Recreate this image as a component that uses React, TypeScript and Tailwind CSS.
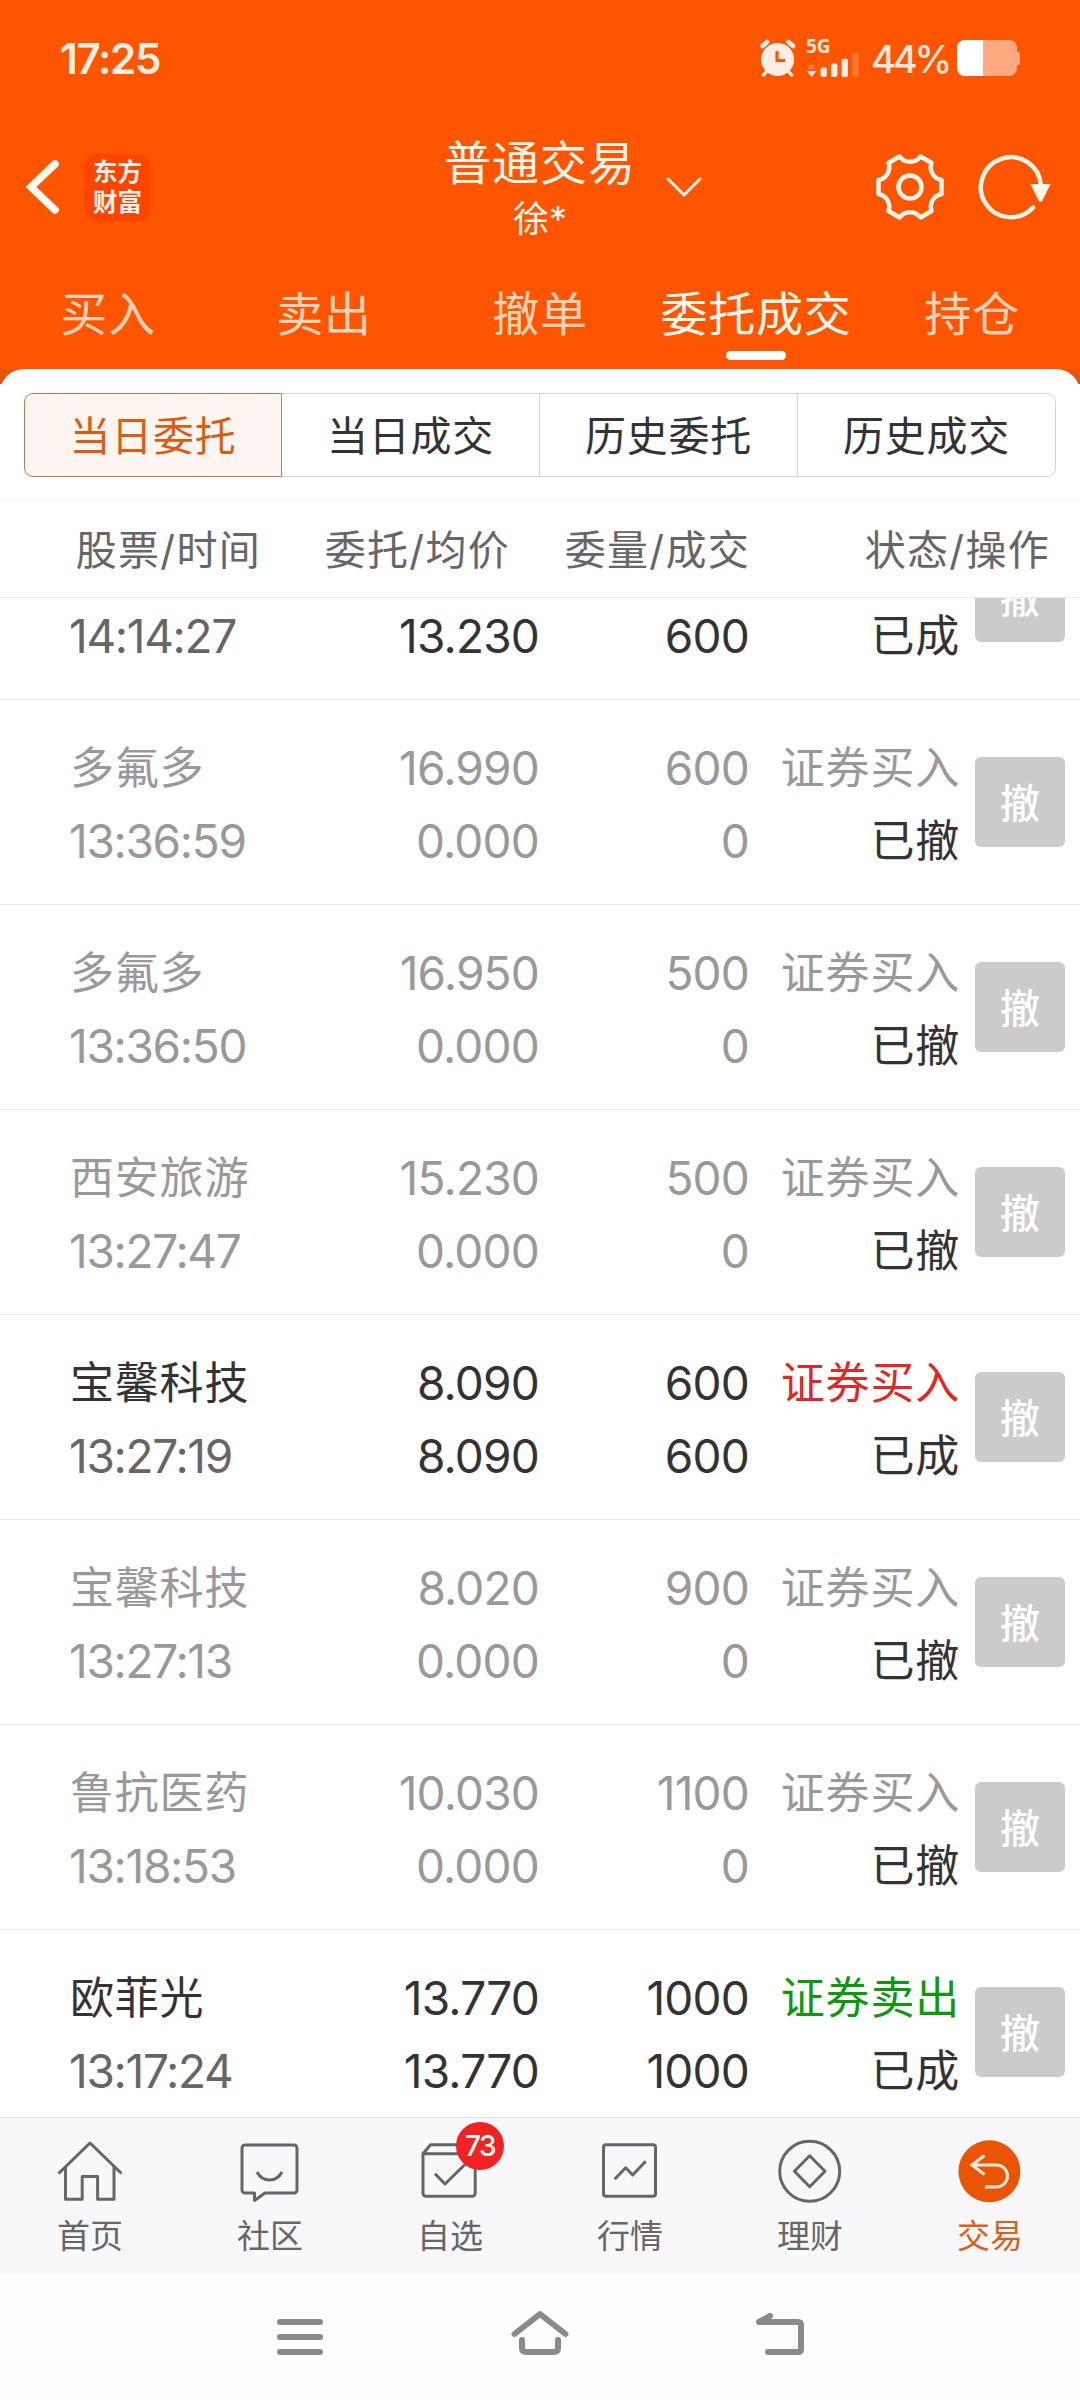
import type { ReactNode } from 'react';
import { clsx } from 'clsx';

interface Order {
  name?: string;
  time: string;
  price?: string;
  avgPrice: string;
  amount?: string;
  dealAmount: string;
  side?: 'buy' | 'sell';
  status: '已成' | '已撤';
}

const orders: Order[] = [
  { time: '14:14:27', avgPrice: '13.230', dealAmount: '600', status: '已成' },
  { name: '多氟多', time: '13:36:59', price: '16.990', avgPrice: '0.000', amount: '600', dealAmount: '0', side: 'buy', status: '已撤' },
  { name: '多氟多', time: '13:36:50', price: '16.950', avgPrice: '0.000', amount: '500', dealAmount: '0', side: 'buy', status: '已撤' },
  { name: '西安旅游', time: '13:27:47', price: '15.230', avgPrice: '0.000', amount: '500', dealAmount: '0', side: 'buy', status: '已撤' },
  { name: '宝馨科技', time: '13:27:19', price: '8.090', avgPrice: '8.090', amount: '600', dealAmount: '600', side: 'buy', status: '已成' },
  { name: '宝馨科技', time: '13:27:13', price: '8.020', avgPrice: '0.000', amount: '900', dealAmount: '0', side: 'buy', status: '已撤' },
  { name: '鲁抗医药', time: '13:18:53', price: '10.030', avgPrice: '0.000', amount: '1100', dealAmount: '0', side: 'buy', status: '已撤' },
  { name: '欧菲光', time: '13:17:24', price: '13.770', avgPrice: '13.770', amount: '1000', dealAmount: '1000', side: 'sell', status: '已成' },
];

const tabs = ['买入', '卖出', '撤单', '委托成交', '持仓'];
const segments = ['当日委托', '当日成交', '历史委托', '历史成交'];

function StatusBar() {
  return (
    <div className="flex h-[116px] items-center justify-between pl-[60px] pr-[60px]">
      <span className="pt-px text-[42px] font-semibold leading-none tracking-[-1.3px] text-[#ffeee0]">17:25</span>
      <div className="flex items-center">
        <svg className="h-[40px] w-[40px]" viewBox="0 0 40 40" fill="none" strokeLinecap="round">
          <circle cx="19.6" cy="21.5" r="16.5" fill="#ffeee6" />
          <path d="M4.500 8L9 4M35 8l-4.500-4" stroke="#ffeee6" strokeWidth="4.500" />
          <path d="M8 34l-2.500 3M31 34l2.500 3" stroke="#ffeee6" strokeWidth="3.500" />
          <path d="M19 13v9.500h8" stroke="#ff5500" strokeWidth="3.200" strokeLinecap="butt" />
        </svg>
        <div className="ml-[8px] flex h-[40px] w-[56px] flex-col">
          <span className="h-[15px] font-['Noto_Sans'] text-[19px] font-bold leading-[17px] text-[#ffe4d4]">5G</span>
          <svg className="h-[26px] w-[56px]" viewBox="0 0 56 26">
            <path d="M0 17l4.700-6 4.800 6z" fill="#ff7c3d" />
            <path d="M0 19h9.500l-4.700 6z" fill="#ffeee6" />
            <rect x="14" y="15" width="6.500" height="10" rx="2" fill="#ffeee6" />
            <rect x="25" y="11" width="6.500" height="14" rx="2" fill="#ffeee6" />
            <rect x="36" y="6" width="6.500" height="19" rx="2" fill="#ffeee6" />
            <rect x="47" y="0" width="6.500" height="25" rx="2" fill="#ff7733" />
          </svg>
        </div>
        <span className="ml-[9px] w-[78px] pt-px text-[38px] font-medium leading-none tracking-[-3.2px] text-[#ffe9dc]">44%</span>
        <div className="ml-[8px] flex items-center">
          <div className="h-[36px] w-[60px] overflow-hidden rounded-[8px] bg-[#ffa981]">
            <div className="h-full w-[26px] bg-white" />
          </div>
          <div className="h-[13px] w-[3px] rounded-r-[2px] bg-[#ffa981]" />
        </div>
      </div>
    </div>
  );
}

function TitleBar() {
  return (
    <div className="grid h-[142px] grid-cols-[440px_1fr_238px]">
      <div className="flex items-center pl-[24px]">
        <svg className="h-[60px] w-[40px]" viewBox="0 0 40 60" fill="none" stroke="#fffaf0" strokeWidth="7.500" strokeLinecap="round">
          <path d="M31 7L7 30l24 23" />
        </svg>
        <div className="ml-[20px] flex h-[67px] w-[67px] flex-col items-center justify-center rounded-[14px] bg-[#ff4400] text-[24.5px] font-bold leading-[30px] text-[#fff3ec]">
          <span>东方</span>
          <span>财富</span>
        </div>
      </div>
      <div className="flex items-center">
        <div className="flex w-[200px] flex-col items-center pt-[3px] text-[#fff6ea]">
          <span className="text-[47px] leading-[60px] tracking-[1px]">普通交易</span>
          <span className="text-[36px] leading-[52px]">徐*</span>
        </div>
        <svg className="ml-[24px] h-[24px] w-[40px]" viewBox="0 0 40 24" fill="none" stroke="#fff6ea" strokeWidth="3" strokeLinecap="round" strokeLinejoin="round">
          <path d="M4 4l16 16L36 4" />
        </svg>
      </div>
      <div className="flex items-center pl-[32px]">
        <svg className="h-[72px] w-[72px] shrink-0" viewBox="-36 -36 72 72" fill="none" stroke="#fff6ea" strokeWidth="4.500" strokeLinejoin="round">
          <path d="M10.500-30.500L21.500-24A13 13 0 0 0 31.500-7V7A13 13 0 0 0 21.500 24L10.500 30.500A13 13 0 0 0-10.500 30.500L-21.500 24A13 13 0 0 0-31.500 7V-7A13 13 0 0 0-21.500-24L-10.500-30.500A13 13 0 0 0 10.500-30.500z" />
          <circle r="11.500" />
        </svg>
        <svg className="ml-[29px] h-[72px] w-[78px] shrink-0" viewBox="-36 -36 78 72" fill="none">
          <path d="M22 20.500A30 30 0 1 1 29.800-2" stroke="#fff6ea" strokeWidth="4.500" strokeLinecap="round" />
          <path d="M19.500-3h20L31 14.500h-3z" fill="#fff6ea" />
        </svg>
      </div>
    </div>
  );
}

function TradeTabs() {
  return (
    <nav className="grid h-[111px] grid-cols-5">
      {tabs.map((tab) => {
        const active = tab === '委托成交';
        return (
          <div key={tab} className="flex flex-col items-center pt-[25px]">
            <span className={clsx('text-[47px] leading-[62px] tracking-[0.8px]', active ? 'text-[#fff8ee]' : 'text-[#ffd3b8]')}>{tab}</span>
            {active && <div className="mt-[6px] h-[9px] w-[60px] rounded-full bg-white" />}
          </div>
        );
      })}
    </nav>
  );
}

function Segments() {
  return (
    <div className="h-[117px] border-b border-[#f6f6f6] px-[24px] pt-[9px]">
      <div className="grid h-[84px] grid-cols-4">
        {segments.map((item, i) => (
          <div
            key={item}
            className={clsx(
              'flex items-center justify-center border pt-[4px] text-[41px] tracking-[0.7px]',
              i === 0 && 'rounded-l-[9px] border-[#c07a4c] bg-[#fff6f2] text-[#dd5c14]',
              i > 0 && 'border-l-0 border-[#d4d4d4] text-[#333333]',
              i === 3 && 'rounded-r-[9px]'
            )}
          >
            {item}
          </div>
        ))}
      </div>
    </div>
  );
}

function TableHead() {
  return (
    <div className="grid h-[97px] grid-cols-[261px_249px_240px_300px] items-center border-b border-[#ebebeb] pt-[4px] text-right text-[41px] tracking-[1.300px] text-[#666666]">
      <span>股票/时间</span>
      <span>委托/均价</span>
      <span>委量/成交</span>
      <span>状态/操作</span>
    </div>
  );
}

function OrderRow({ order }: { order: Order }) {
  const cancelled = order.status === '已撤';
  const sideColor = cancelled ? 'text-[#999999]' : order.side === 'sell' ? 'text-[#0c990c]' : 'text-[#dc2a26]';

  return (
    <div
      className={clsx(
        'flex h-[205px] shrink-0 border-b border-[#ebebeb] pt-[32px] text-[46px] leading-[73px] tracking-[-0.8px]',
        cancelled ? 'text-[#999999]' : 'text-[#333333]'
      )}
    >
      <div className="w-[300px] pl-[70px]">
        <p className="h-[73px] text-[44px] tracking-[0.8px]">{order.name}</p>
        <p className={clsx('-ml-px h-[73px] tracking-[-1.3px]', !cancelled && 'text-[#666666]')}>{order.time}</p>
      </div>
      <div className="w-[239px] text-right">
        <p className="h-[73px]">{order.price}</p>
        <p className="h-[73px]">{order.avgPrice}</p>
      </div>
      <div className="w-[210px] text-right">
        <p className="h-[73px]">{order.amount}</p>
        <p className="h-[73px]">{order.dealAmount}</p>
      </div>
      <div className="w-[211px] text-right text-[44px] tracking-[0.8px]">
        <p className={clsx('h-[73px]', sideColor)}>{order.side && (order.side === 'buy' ? '证券买入' : '证券卖出')}</p>
        <p className="h-[73px] text-[#333333]">{order.status}</p>
      </div>
      <button className="ml-[15px] mt-[25px] flex h-[90px] w-[90px] items-center justify-center rounded-[6px] bg-[#cbcbcb] pt-[4px] text-[40px] font-medium leading-none tracking-normal text-white">
        撤
      </button>
    </div>
  );
}

function NavItem({ label, active, badge, children }: { label: string; active?: boolean; badge?: string; children: ReactNode }) {
  return (
    <div className={clsx('flex flex-col items-center pt-[20px]', active ? 'text-[#d9601f]' : 'text-[#666666]')}>
      <div className="relative h-[66px] w-[72px]">
        <svg className="h-[66px] w-[72px]" viewBox="0 0 72 66" fill="none" stroke="currentColor" strokeWidth="3" strokeLinejoin="round">
          {children}
        </svg>
        {badge && (
          <span className="absolute -top-[16px] left-[42px] flex h-[48px] w-[48px] items-center justify-center rounded-full bg-[#f02222] text-[28px] font-medium tracking-[-1.500px] text-white">
            {badge}
          </span>
        )}
      </div>
      <span className="mt-[10px] text-[33px] leading-[44px]">{label}</span>
    </div>
  );
}

function BottomNav() {
  return (
    <nav className="grid h-[157px] grid-cols-6 border-t border-[#dfdfe2] bg-[#f8f8fa]">
      <NavItem label="首页">
        <path d="M4.500 35.500L36 5l31.500 30.500M11.500 29v32.300h16.700V38.500h15.400v22.800H60V29" />
      </NavItem>
      <NavItem label="社区">
        <path d="M11 7h49a3 3 0 0 1 3 3v42a3 3 0 0 1-3 3H31l-10.500 7.500V55H11a3 3 0 0 1-3-3V10a3 3 0 0 1 3-3zM23 34c5.500 10.500 19.500 10.500 25 0" />
      </NavItem>
      <NavItem label="自选" badge="73">
        <path d="M9 15.700h52.200v39.500a3 3 0 0 1-3 3H12a3 3 0 0 1-3-3V15.700l7.500-9h37.500l7.200 9M21 35.700L31 46l20-19.500" />
      </NavItem>
      <NavItem label="行情">
        <rect x="9.500" y="6.700" width="52" height="51.500" rx="2.500" />
        <path d="M20.700 41.300l11-11.500 7 7.200 13-13.700" />
      </NavItem>
      <NavItem label="理财">
        <circle cx="35.700" cy="33.300" r="30" />
        <path d="M35.700 17.800l15.300 15.500-15.300 15.500-15.300-15.500z" />
      </NavItem>
      <NavItem label="交易" active>
        <circle cx="35.400" cy="33.300" r="31" fill="#e95504" stroke="none" />
        <path d="M30.500 17.500L18 27l12.500 9.500M18 27h24.500a11 11 0 0 1 0 22H31" stroke="#ffecd8" strokeLinejoin="miter" />
      </NavItem>
    </nav>
  );
}

function SystemNav() {
  return (
    <div className="flex h-[126px] justify-center gap-[180px] bg-[#fefefe] pt-[36px]">
      <svg className="h-[48px] w-[60px]" viewBox="0 0 60 48" fill="none" stroke="#8a8a8a" strokeWidth="6" strokeLinecap="round">
        <path d="M10 12h40M10 27h40M10 42h40" />
      </svg>
      <svg className="h-[48px] w-[60px]" viewBox="0 0 60 48" fill="none" stroke="#8a8a8a" strokeWidth="6" strokeLinecap="round" strokeLinejoin="round">
        <path d="M4.500 24L30 4l25.500 20M12 30v8q0 4 4 4h28q4 0 4-4v-8" />
      </svg>
      <svg className="h-[48px] w-[60px]" viewBox="0 0 60 48" fill="none" stroke="#8a8a8a" strokeWidth="6" strokeLinecap="round" strokeLinejoin="round">
        <path d="M20 6L9 12h39q3 0 3 3v24q0 3-3 3H18" />
      </svg>
    </div>
  );
}

export default function App() {
  return (
    <div className="flex h-[2400px] w-[1080px] flex-col overflow-hidden bg-white font-['Inter','Noto_Sans_CJK_SC',sans-serif]">
      <header className="bg-[#ff5500]">
        <StatusBar />
        <TitleBar />
        <TradeTabs />
      </header>
      <div className="h-[15px] overflow-hidden bg-[#e85405]">
        <div className="h-[30px] rounded-t-[24px] bg-white" />
      </div>
      <Segments />
      <TableHead />
      {/* 列表已滚动，第一行只露出下半部分 */}
      <main className="h-[1519px] overflow-hidden">
        <div className="-mt-[103px] flex flex-col">
          {orders.map((order) => (
            <OrderRow key={order.time} order={order} />
          ))}
        </div>
      </main>
      <BottomNav />
      <SystemNav />
    </div>
  );
}
